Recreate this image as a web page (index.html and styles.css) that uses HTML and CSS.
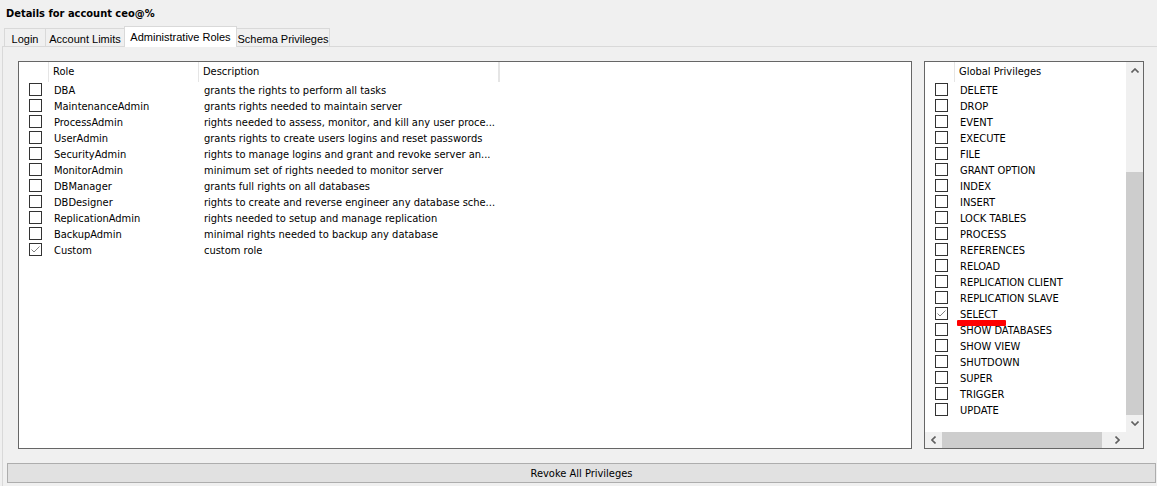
FILE: index.html
```html
<!DOCTYPE html>
<html lang="en">
<head>
<meta charset="UTF-8">
<meta name="viewport" content="width=device-width, initial-scale=1.0">
<title>Details for account ceo@%</title>
<link rel="stylesheet" href="styles.css">
</head>
<body>
<div class="title">Details for account ceo@%</div>

<div class="tabs">
  <div class="tab tab-login">Login</div>
  <div class="tab tab-limits">Account Limits</div>
  <div class="tab tab-roles active">Administrative Roles</div>
  <div class="tab tab-schema">Schema Privileges</div>
</div>

<div class="panel">
  <div class="lists">
    <div class="listbox roles">
      <div class="head">
        <div class="c-check"></div>
        <div class="c-role">Role</div>
        <div class="c-desc">Description</div>
        <div class="c-rest"></div>
      </div>
      <div class="row"><div class="c-check"><span class="box"></span></div><div class="c-role">DBA</div><div class="c-desc">grants the rights to perform all tasks</div></div>
      <div class="row"><div class="c-check"><span class="box"></span></div><div class="c-role">MaintenanceAdmin</div><div class="c-desc">grants rights needed to maintain server</div></div>
      <div class="row"><div class="c-check"><span class="box"></span></div><div class="c-role">ProcessAdmin</div><div class="c-desc">rights needed to assess, monitor, and kill any user proce...</div></div>
      <div class="row"><div class="c-check"><span class="box"></span></div><div class="c-role">UserAdmin</div><div class="c-desc">grants rights to create users logins and reset passwords</div></div>
      <div class="row"><div class="c-check"><span class="box"></span></div><div class="c-role">SecurityAdmin</div><div class="c-desc">rights to manage logins and grant and revoke server an...</div></div>
      <div class="row"><div class="c-check"><span class="box"></span></div><div class="c-role">MonitorAdmin</div><div class="c-desc">minimum set of rights needed to monitor server</div></div>
      <div class="row"><div class="c-check"><span class="box"></span></div><div class="c-role">DBManager</div><div class="c-desc">grants full rights on all databases</div></div>
      <div class="row"><div class="c-check"><span class="box"></span></div><div class="c-role">DBDesigner</div><div class="c-desc">rights to create and reverse engineer any database sche...</div></div>
      <div class="row"><div class="c-check"><span class="box"></span></div><div class="c-role">ReplicationAdmin</div><div class="c-desc">rights needed to setup and manage replication</div></div>
      <div class="row"><div class="c-check"><span class="box"></span></div><div class="c-role">BackupAdmin</div><div class="c-desc">minimal rights needed to backup any database</div></div>
      <div class="row"><div class="c-check"><span class="box checked"><svg width="11" height="11" viewBox="0 0 11 11"><polyline points="1.5,5.5 4,8 9.5,2.5" fill="none" stroke="#808080" stroke-width="1"/></svg></span></div><div class="c-role">Custom</div><div class="c-desc">custom role</div></div>
    </div>

    <div class="listbox privs">
      <div class="privs-body">
        <div class="head">
          <div class="c-check"></div>
          <div class="c-name">Global Privileges</div>
        </div>
        <div class="row"><div class="c-check"><span class="box"></span></div><div class="c-name">DELETE</div></div>
        <div class="row"><div class="c-check"><span class="box"></span></div><div class="c-name">DROP</div></div>
        <div class="row"><div class="c-check"><span class="box"></span></div><div class="c-name">EVENT</div></div>
        <div class="row"><div class="c-check"><span class="box"></span></div><div class="c-name">EXECUTE</div></div>
        <div class="row"><div class="c-check"><span class="box"></span></div><div class="c-name">FILE</div></div>
        <div class="row"><div class="c-check"><span class="box"></span></div><div class="c-name">GRANT OPTION</div></div>
        <div class="row"><div class="c-check"><span class="box"></span></div><div class="c-name">INDEX</div></div>
        <div class="row"><div class="c-check"><span class="box"></span></div><div class="c-name">INSERT</div></div>
        <div class="row"><div class="c-check"><span class="box"></span></div><div class="c-name">LOCK TABLES</div></div>
        <div class="row"><div class="c-check"><span class="box"></span></div><div class="c-name">PROCESS</div></div>
        <div class="row"><div class="c-check"><span class="box"></span></div><div class="c-name">REFERENCES</div></div>
        <div class="row"><div class="c-check"><span class="box"></span></div><div class="c-name">RELOAD</div></div>
        <div class="row"><div class="c-check"><span class="box"></span></div><div class="c-name">REPLICATION CLIENT</div></div>
        <div class="row"><div class="c-check"><span class="box"></span></div><div class="c-name">REPLICATION SLAVE</div></div>
        <div class="row"><div class="c-check"><span class="box checked"><svg width="11" height="11" viewBox="0 0 11 11"><polyline points="1.5,5.5 4,8 9.5,2.5" fill="none" stroke="#808080" stroke-width="1"/></svg></span></div><div class="c-name marked">SELECT</div></div>
        <div class="row"><div class="c-check"><span class="box"></span></div><div class="c-name">SHOW DATABASES</div></div>
        <div class="row"><div class="c-check"><span class="box"></span></div><div class="c-name">SHOW VIEW</div></div>
        <div class="row"><div class="c-check"><span class="box"></span></div><div class="c-name">SHUTDOWN</div></div>
        <div class="row"><div class="c-check"><span class="box"></span></div><div class="c-name">SUPER</div></div>
        <div class="row"><div class="c-check"><span class="box"></span></div><div class="c-name">TRIGGER</div></div>
        <div class="row"><div class="c-check"><span class="box"></span></div><div class="c-name">UPDATE</div></div>
      </div>

      <div class="vscroll">
        <div class="sb-btn"><svg width="8" height="5" viewBox="0 0 8 5"><path d="M0.5 4.5 L4 1 L7.5 4.5" fill="none" stroke="#606060" stroke-width="1.6"/></svg></div>
        <div class="v-space"></div>
        <div class="v-thumb"></div>
        <div class="sb-btn"><svg width="8" height="5" viewBox="0 0 8 5"><path d="M0.5 0.5 L4 4 L7.5 0.5" fill="none" stroke="#606060" stroke-width="1.6"/></svg></div>
      </div>
      <div class="hscroll">
        <div class="sb-btn"><svg width="5" height="8" viewBox="0 0 5 8"><path d="M4.5 0.5 L1 4 L4.5 7.5" fill="none" stroke="#606060" stroke-width="1.6"/></svg></div>
        <div class="h-thumb"></div>
        <div class="h-space"></div>
        <div class="sb-btn"><svg width="5" height="8" viewBox="0 0 5 8"><path d="M0.5 0.5 L4 4 L0.5 7.5" fill="none" stroke="#606060" stroke-width="1.6"/></svg></div>
      </div>
      <div class="corner"></div>
    </div>
  </div>

  <button type="button" class="revoke">Revoke All Privileges</button>
</div>
</body>
</html>
```

FILE: styles.css
```css
body {
  margin: 0;
  width: 1157px;
  height: 486px;
  overflow: hidden;
  background-color: #f0f0f0;
  font-family: "DejaVu Sans Condensed", "DejaVu Sans", sans-serif;
  font-size: 11px;
  color: #000;
}

.title {
  height: 26px;
  box-sizing: border-box;
  padding: 7px 0 0 6px;
  line-height: 14px;
  font-weight: bold;
}

/* tab strip */
.tabs {
  display: flex;
  align-items: flex-end;
  height: 20px;
  padding-left: 4px;
  position: relative;
  z-index: 1;
  font-family: "Liberation Sans", Arial, sans-serif;
}

.tab {
  height: 18px;
  box-sizing: border-box;
  margin-right: -1px;
  padding-top: 3px;
  line-height: 14px;
  text-align: center;
  border: 1px solid #d9d9d9;
  border-bottom: none;
  background-color: #f0f0f0;
}

.tab.active {
  height: 21px;
  margin-bottom: -1px;
  padding-top: 3px;
  background-color: #fff;
}

.tab-login { width: 42px; }
.tab-limits { width: 80px; }
.tab-roles { width: 113px; }
.tab-schema { width: 94px; }

/* tab page */
.panel {
  margin-left: 2px;
  height: 440px;
  border-top: 1px solid #d9d9d9;
  border-left: 1px solid #d9d9d9;
}

.lists {
  display: flex;
  gap: 12px;
  padding: 14px 13px 0 15px;
}

.listbox {
  height: 388px;
  box-sizing: border-box;
  border: 1px solid #666;
  background-color: #fff;
  overflow: hidden;
}

.roles {
  flex: 1;
}

.head {
  display: flex;
  height: 20px;
  line-height: 20px;
}

.head > div {
  border-right: 1px solid #e5e5e5;
  box-sizing: border-box;
}

.head .c-role,
.head .c-desc,
.head .c-name {
  padding-left: 4px;
}

.row {
  display: flex;
  height: 16px;
  line-height: 17px;
  white-space: nowrap;
}

.c-check {
  width: 30px;
  flex-shrink: 0;
  box-sizing: border-box;
  padding: 1px 0 0 10px;
}

.c-role {
  width: 150px;
  box-sizing: border-box;
  padding-left: 5px;
}

.c-desc {
  width: 300px;
  box-sizing: border-box;
  padding-left: 5px;
  overflow: hidden;
}

.c-name {
  padding-left: 5px;
}

.head .c-name {
  flex: 1;
  border-right: none;
}

.box {
  display: block;
  width: 13px;
  height: 13px;
  box-sizing: border-box;
  border: 1px solid #333;
  background-color: #fff;
}

.box svg {
  display: block;
}

/* red marker drawn under SELECT */
.marked {
  position: relative;
}

.marked::after {
  content: "";
  position: absolute;
  left: 2px;
  top: 14px;
  width: 49px;
  height: 6px;
  border-radius: 1px;
  background-color: #f00;
}

/* privileges list with scrollbars */
.privs {
  width: 220px;
  display: grid;
  grid-template-columns: 1fr 17px;
  grid-template-rows: 1fr 16px;
}

.privs-body {
  overflow: hidden;
}

.vscroll {
  display: flex;
  flex-direction: column;
  background-color: #f0f0f0;
}

.hscroll {
  display: flex;
  background-color: #f0f0f0;
}

.sb-btn {
  width: 17px;
  height: 17px;
  flex-shrink: 0;
  display: flex;
  align-items: center;
  justify-content: center;
}

.hscroll .sb-btn {
  height: 16px;
}

.v-space {
  height: 93px;
}

.v-thumb {
  height: 243px;
  background-color: #cdcdcd;
}

.h-thumb {
  width: 160px;
  background-color: #cdcdcd;
}

.h-space {
  flex: 1;
}

.corner {
  background-color: #f0f0f0;
}

.revoke {
  display: block;
  width: 1149px;
  height: 20px;
  margin: 14px 0 0 4px;
  padding: 0;
  border: 1px solid #adadad;
  background-color: #e1e1e1;
  font-family: "DejaVu Sans Condensed", "DejaVu Sans", sans-serif;
  font-size: 11px;
  color: #000;
}
```
